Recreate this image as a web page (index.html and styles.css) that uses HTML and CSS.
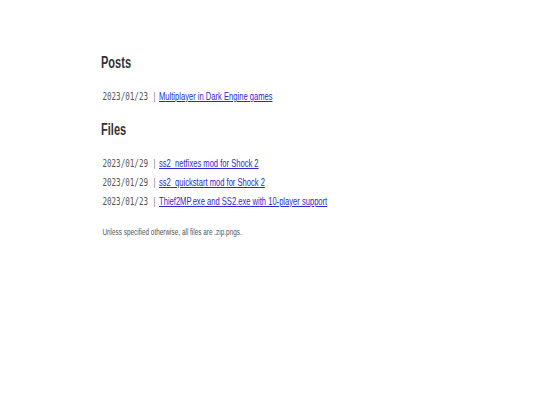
FILE: index.html
```html
<!DOCTYPE html>
<html lang="en">
<head>
<meta charset="utf-8">
<title>Posts and files</title>
<link rel="stylesheet" href="styles.css">
</head>
<body>
<main class="page">
  <div class="sheet">
    <section class="block">
      <h2 class="heading">Posts</h2>
      <ul class="entries">
        <li class="entry"><span class="date">2023/01/23</span><span class="sep">|</span><a class="link" href="#">Multiplayer in Dark Engine games</a></li>
      </ul>
    </section>
    <section class="block">
      <h2 class="heading">Files</h2>
      <ul class="entries">
        <li class="entry"><span class="date">2023/01/29</span><span class="sep">|</span><a class="link" href="#">ss2_netfixes mod for Shock 2</a></li>
        <li class="entry"><span class="date">2023/01/29</span><span class="sep">|</span><a class="link" href="#">ss2_quickstart mod for Shock 2</a></li>
        <li class="entry"><span class="date">2023/01/23</span><span class="sep">|</span><a class="link" href="#">Thief2MP.exe and SS2.exe with 10-player support</a></li>
      </ul>
      <p class="note">Unless specified otherwise, all files are .zip.pngs.</p>
    </section>
  </div>
</main>
</body>
</html>
```

FILE: styles.css
```css
html, body {
  margin: 0;
  padding: 0;
  background: #fff;
}

.page {
  padding: 53px 0 0 101px;
  font-family: "Liberation Sans", Arial, sans-serif;
  color: #333;
}

/* the site is set in a condensed face; squeeze the column horizontally */
.sheet {
  transform: scaleX(0.69);
  transform-origin: left top;
  width: 600px;
}

.heading {
  margin: 0;
  font-size: 16px;
  font-weight: bold;
  color: #333;
  line-height: 20px;
}

.entries {
  list-style: none;
  margin: 0;
  padding: 17px 0 11px;
}

.entry {
  display: flex;
  align-items: baseline;
  height: 19px;
  font-size: 11px;
}

.date {
  font-family: "DejaVu Sans Mono", monospace;
  font-size: 11px;
  color: #555;
  padding-left: 2px;
}

.sep {
  color: #777;
  margin: 0 5px 0 8px;
}

.link {
  color: #2a2ad0;
  text-decoration: underline;
}

.note {
  margin: 2px 0 0;
  padding-left: 2px;
  font-size: 9.3px;
  color: #555;
}
```
